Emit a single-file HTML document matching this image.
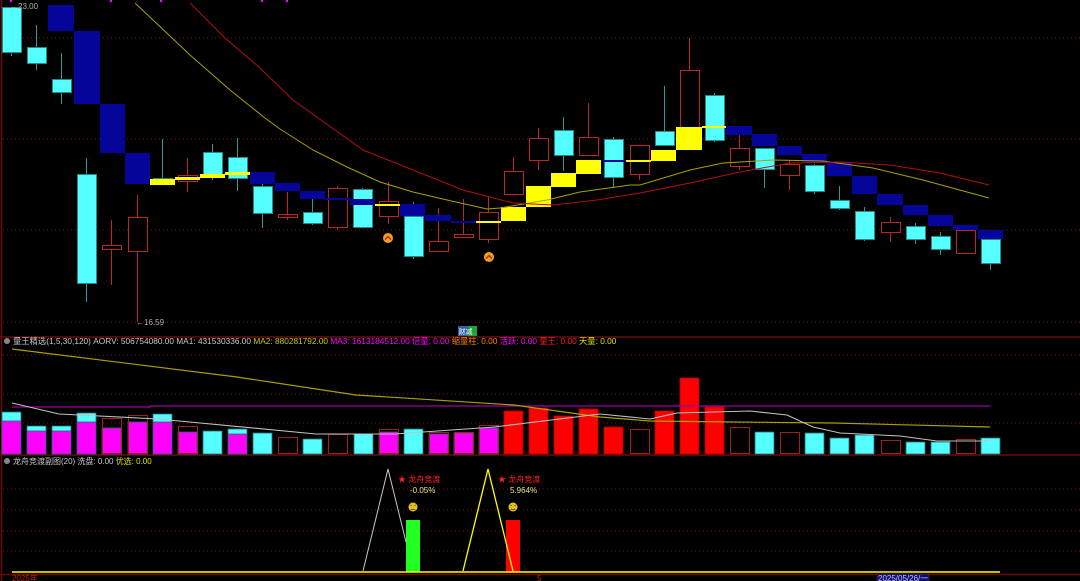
<!DOCTYPE html>
<html><head><meta charset="utf-8"><style>
html,body{margin:0;padding:0;background:#000;width:1080px;height:581px;overflow:hidden}
svg{display:block}
text{font-family:"Liberation Sans","Noto Sans CJK SC",sans-serif;font-size:8px}
</style></head><body>
<svg width="1080" height="581" viewBox="0 0 1080 581" xmlns="http://www.w3.org/2000/svg">
<rect width="1080" height="581" fill="#000"/>
<g stroke="#7a1010" stroke-width="1" stroke-dasharray="1,3">
<line x1="3" y1="38" x2="1080" y2="38"/><line x1="3" y1="139" x2="1080" y2="139"/><line x1="3" y1="230" x2="1080" y2="230"/><line x1="3" y1="322" x2="1080" y2="322"/>
<line x1="3" y1="355" x2="1080" y2="355"/><line x1="3" y1="394" x2="1080" y2="394"/><line x1="3" y1="423" x2="1080" y2="423"/>
<line x1="3" y1="489" x2="1080" y2="489"/><line x1="3" y1="510" x2="1080" y2="510"/><line x1="3" y1="531" x2="1080" y2="531"/><line x1="3" y1="551" x2="1080" y2="551"/>
</g>
<g stroke="#6a0c0c" stroke-width="1.5">
<line x1="0" y1="337" x2="1080" y2="337"/><line x1="0" y1="455" x2="1080" y2="455"/><line x1="0" y1="574.5" x2="1080" y2="574.5"/>
<line x1="1.5" y1="0" x2="1.5" y2="581"/>
</g>
<g stroke-width="1">
<g stroke="#2a9a9a"><line x1="11.5" y1="7" x2="11.5" y2="56"/><line x1="36.5" y1="25" x2="36.5" y2="70"/><line x1="61.5" y1="53" x2="61.5" y2="104"/><line x1="86.5" y1="158" x2="86.5" y2="302"/><line x1="162.5" y1="139" x2="162.5" y2="185"/><line x1="212.5" y1="144" x2="212.5" y2="180"/><line x1="237.5" y1="138" x2="237.5" y2="191"/><line x1="262.5" y1="184" x2="262.5" y2="228"/><line x1="312.5" y1="199" x2="312.5" y2="225"/><line x1="362.5" y1="188" x2="362.5" y2="228"/><line x1="413.5" y1="202" x2="413.5" y2="259"/><line x1="563.5" y1="117" x2="563.5" y2="171"/><line x1="613.5" y1="137" x2="613.5" y2="188"/><line x1="664.5" y1="86" x2="664.5" y2="145"/><line x1="714.5" y1="93" x2="714.5" y2="142"/><line x1="764.5" y1="148" x2="764.5" y2="188"/><line x1="814.5" y1="164" x2="814.5" y2="194"/><line x1="839.5" y1="186" x2="839.5" y2="210"/><line x1="864.5" y1="207" x2="864.5" y2="241"/><line x1="915.5" y1="223" x2="915.5" y2="244"/><line x1="940.5" y1="232" x2="940.5" y2="255"/><line x1="990.5" y1="233" x2="990.5" y2="270"/></g>
<g stroke="#b82828"><line x1="111.5" y1="220" x2="111.5" y2="285"/><line x1="137.5" y1="195" x2="137.5" y2="322"/><line x1="187.5" y1="158" x2="187.5" y2="192"/><line x1="287.5" y1="192" x2="287.5" y2="220"/><line x1="337.5" y1="186" x2="337.5" y2="230"/><line x1="388.5" y1="182" x2="388.5" y2="224"/><line x1="438.5" y1="208" x2="438.5" y2="251"/><line x1="463.5" y1="199" x2="463.5" y2="237"/><line x1="488.5" y1="197" x2="488.5" y2="243"/><line x1="513.5" y1="157" x2="513.5" y2="194"/><line x1="538.5" y1="128" x2="538.5" y2="170"/><line x1="588.5" y1="103" x2="588.5" y2="155"/><line x1="639.5" y1="145" x2="639.5" y2="180"/><line x1="689.5" y1="38" x2="689.5" y2="127"/><line x1="739.5" y1="135" x2="739.5" y2="170"/><line x1="789.5" y1="160" x2="789.5" y2="190"/><line x1="890.5" y1="217" x2="890.5" y2="242"/><line x1="965.5" y1="230" x2="965.5" y2="253"/></g>
<g fill="#55ffff" stroke="#1e8a8a">
<rect x="2.5" y="7.5" width="19" height="45"/><rect x="27.5" y="47.5" width="19" height="16"/><rect x="52.5" y="79.5" width="19" height="13"/><rect x="77.5" y="174.5" width="19" height="109"/><rect x="153.5" y="178.5" width="19" height="4"/><rect x="203.5" y="152.5" width="19" height="23"/><rect x="228.5" y="157.5" width="19" height="21"/><rect x="253.5" y="186.5" width="19" height="27"/><rect x="303.5" y="212.5" width="19" height="11"/><rect x="353.5" y="189.5" width="19" height="38"/><rect x="404.5" y="216.5" width="19" height="40"/><rect x="554.5" y="130.5" width="19" height="25"/><rect x="604.5" y="139.5" width="19" height="38"/><rect x="655.5" y="131.5" width="19" height="14"/><rect x="705.5" y="95.5" width="19" height="45"/><rect x="755.5" y="148.5" width="19" height="21"/><rect x="805.5" y="165.5" width="19" height="26"/><rect x="830.5" y="200.5" width="19" height="8"/><rect x="855.5" y="211.5" width="19" height="28"/><rect x="906.5" y="226.5" width="19" height="13"/><rect x="931.5" y="236.5" width="19" height="13"/><rect x="981.5" y="239.5" width="19" height="24"/>
</g>
<g fill="#000" stroke="#b82828">
<rect x="102.5" y="245.5" width="19" height="4"/><rect x="128.5" y="217.5" width="19" height="34"/><rect x="178.5" y="175.5" width="19" height="6"/><rect x="278.5" y="214.5" width="19" height="3"/><rect x="328.5" y="188.5" width="19" height="39"/><rect x="379.5" y="201.5" width="19" height="15"/><rect x="429.5" y="241.5" width="19" height="10"/><rect x="454.5" y="234.5" width="19" height="3"/><rect x="479.5" y="212.5" width="19" height="27"/><rect x="504.5" y="171.5" width="19" height="23"/><rect x="529.5" y="138.5" width="19" height="22"/><rect x="579.5" y="137.5" width="19" height="18"/><rect x="630.5" y="145.5" width="19" height="29"/><rect x="680.5" y="70.5" width="19" height="57"/><rect x="730.5" y="148.5" width="19" height="18"/><rect x="780.5" y="164.5" width="19" height="11"/><rect x="881.5" y="222.5" width="19" height="10"/><rect x="956.5" y="230.5" width="19" height="23"/>
</g>
</g>
<g fill="#050599">
<rect x="48" y="5" width="26" height="26"/><rect x="74" y="31" width="26" height="73"/><rect x="100" y="104" width="25" height="49"/><rect x="125" y="153" width="25" height="31"/><rect x="250" y="172" width="25" height="12"/><rect x="275" y="183" width="25" height="8"/><rect x="300" y="191" width="25" height="8"/><rect x="325" y="198" width="25" height="2"/><rect x="350" y="199" width="25" height="6"/><rect x="400" y="204" width="25" height="12"/><rect x="425" y="215" width="26" height="6"/><rect x="451" y="221" width="25" height="2"/><rect x="601" y="160" width="25" height="2"/><rect x="726" y="126" width="26" height="9"/><rect x="752" y="134" width="25" height="12"/><rect x="777" y="146" width="25" height="9"/><rect x="802" y="154" width="25" height="8"/><rect x="827" y="162" width="25" height="14"/><rect x="852" y="176" width="25" height="18"/><rect x="877" y="194" width="26" height="11"/><rect x="903" y="205" width="25" height="10"/><rect x="928" y="215" width="25" height="11"/><rect x="953" y="225" width="25" height="5"/><rect x="978" y="230" width="25" height="9"/>
</g>
<g fill="#ffff00">
<rect x="150" y="179" width="25" height="6"/><rect x="175" y="177" width="25" height="3"/><rect x="200" y="174" width="25" height="4"/><rect x="225" y="172" width="25" height="3"/><rect x="375" y="204" width="25" height="2"/><rect x="476" y="221" width="25" height="2"/><rect x="501" y="207" width="25" height="14"/><rect x="526" y="186" width="25" height="21"/><rect x="551" y="173" width="25" height="14"/><rect x="576" y="160" width="25" height="14"/><rect x="626" y="160" width="25" height="2"/><rect x="651" y="150" width="25" height="11"/><rect x="676" y="127" width="26" height="23"/><rect x="702" y="126" width="24" height="2"/>
</g>
<polyline fill="none" stroke="#a8a000" stroke-width="1" points="135,3 190,55 230,90 265,118 280,129 313,150 347,167 380,182 413,192 447,200 487,209 500,208 547,200 580,192 630,185 640,185 690,170 723,163 773,160 823,161 873,168 923,180 989,198"/>
<polyline fill="none" stroke="#b01010" stroke-width="1" points="190,3 225,38 260,68 293,100 363,150 413,170 463,190 513,203 553,205 597,200 640,193 690,183 740,172 790,163 840,162 890,165 940,173 989,185"/>
<g><circle cx="388" cy="238" r="5" fill="#f0a020"/><path d="M385 239.5l3-3 3 3" stroke="#b02000" stroke-width="1.3" fill="none"/>
<circle cx="489" cy="257" r="5" fill="#f0a020"/><path d="M486 258.5l3-3 3 3" stroke="#b02000" stroke-width="1.3" fill="none"/></g>
<g fill="#ff00ff"><rect x="10" y="0" width="2" height="2"/><rect x="110" y="0" width="2" height="2"/><rect x="160" y="0" width="2" height="2"/><rect x="261" y="0" width="2" height="2"/><rect x="286" y="0" width="2" height="2"/></g>
<text x="10" y="9" fill="#b0b0b0">←23.00</text>
<text x="136" y="325" fill="#b0b0b0">←16.59</text>
<rect x="458" y="326" width="10" height="10" fill="#3060a0"/><rect x="468" y="326" width="9" height="10" fill="#20a040"/>
<text x="458.5" y="334" fill="#fff" style="font-size:7px">财减</text>
<circle cx="7" cy="341" r="3" fill="#888"/>
<text y="344" x="13" style="font-size:8.3px"><tspan fill="#c8c8c8">量王精选(1,5,30,120)  AORV: 506754080.00  MA1: 431530336.00 </tspan><tspan fill="#c8c800"> MA2: 880281792.00 </tspan><tspan fill="#ff00ff"> MA3: 1613184512.00 </tspan><tspan fill="#ff00ff"> 倍量: 0.00 </tspan><tspan fill="#ff8000"> 缩量柱: 0.00 </tspan><tspan fill="#ff00ff"> 活跃: 0.00 </tspan><tspan fill="#ff2020"> 量王: 0.00 </tspan><tspan fill="#e0e000"> 天量: 0.00</tspan></text>
<g stroke="#18707a" stroke-width="0.8">
<g fill="#ff00ff"><rect x="2" y="421" width="19" height="33"/><rect x="27" y="431" width="19" height="23"/><rect x="52" y="431" width="19" height="23"/><rect x="77" y="422" width="19" height="32"/><rect x="102" y="428" width="19" height="26"/><rect x="128" y="422" width="19" height="32"/><rect x="153" y="422" width="19" height="32"/><rect x="178" y="432" width="19" height="22"/><rect x="228" y="434" width="19" height="20"/><rect x="379" y="432" width="19" height="22"/><rect x="429" y="434" width="19" height="20"/><rect x="454" y="433" width="19" height="21"/><rect x="479" y="428" width="19" height="26"/></g>
<g fill="#55ffff"><rect x="2" y="412" width="19" height="9"/><rect x="27" y="426" width="19" height="5"/><rect x="52" y="426" width="19" height="5"/><rect x="77" y="413" width="19" height="9"/><rect x="153" y="414" width="19" height="8"/><rect x="228" y="429" width="19" height="5"/><rect x="203" y="431" width="19" height="23"/><rect x="253" y="433" width="19" height="21"/><rect x="303" y="439" width="19" height="15"/><rect x="404" y="429" width="19" height="25"/><rect x="354" y="434" width="19" height="20"/><rect x="755" y="432" width="19" height="22"/><rect x="805" y="433" width="19" height="21"/><rect x="830" y="438" width="19" height="16"/><rect x="855" y="435" width="19" height="19"/><rect x="906" y="442" width="19" height="12"/><rect x="931" y="442" width="19" height="12"/><rect x="981" y="438" width="19" height="16"/></g>
</g>
<g fill="none" stroke="#a02020" stroke-width="1">
<rect x="102.5" y="418.5" width="19" height="35"/><rect x="128.5" y="415.5" width="19" height="38"/><rect x="178.5" y="426.5" width="19" height="27"/><rect x="278.5" y="437.5" width="19" height="16"/><rect x="328.5" y="434.5" width="19" height="19"/><rect x="379.5" y="429.5" width="19" height="24"/><rect x="429.5" y="432.5" width="19" height="21"/><rect x="454.5" y="432.5" width="19" height="21"/><rect x="479.5" y="425.5" width="19" height="28"/><rect x="630.5" y="429.5" width="19" height="24"/><rect x="730.5" y="427.5" width="19" height="26"/><rect x="780.5" y="432.5" width="19" height="21"/><rect x="881.5" y="440.5" width="19" height="13"/><rect x="956.5" y="439.5" width="19" height="14"/>
</g>
<g fill="#ff0000" stroke="#b00000" stroke-width="0.8"><rect x="504" y="411" width="19" height="43"/><rect x="529" y="408" width="19" height="46"/><rect x="554" y="416" width="19" height="38"/><rect x="579" y="409" width="19" height="45"/><rect x="604" y="427" width="19" height="27"/><rect x="655" y="411" width="19" height="43"/><rect x="680" y="378" width="19" height="76"/><rect x="705" y="407" width="19" height="47"/></g>
<polyline fill="none" stroke="#a000a0" stroke-width="1.2" points="12,407 150,407 150,406 990,406"/>
<polyline fill="none" stroke="#a8a000" stroke-width="1.2" points="12,349 237,377 356,395 514,405 600,417 650,421 733,422 833,423 990,427"/>
<polyline fill="none" stroke="#c0c0c0" stroke-width="1.1" points="12,403 59,414 158,419 316,434 395,434 494,427 600,414 650,419 677,413 750,411 787,415 813,427 840,433 900,436 937,441 990,441"/>
<circle cx="7" cy="461" r="3" fill="#888"/>
<text y="464" x="13"><tspan fill="#c8c8c8">龙舟竞渡副图(20)  洗盘: 0.00 </tspan><tspan fill="#e0e000"> 优选: 0.00</tspan></text>
<rect x="406" y="520" width="14" height="52" fill="#22ff22"/>
<rect x="506" y="520" width="14" height="52" fill="#ff0000"/>
<polyline fill="none" stroke="#c8c8c8" stroke-width="1" points="363,571 388,469 406,542"/>
<polyline fill="none" stroke="#ffff00" stroke-width="1.3" points="463,571 488,469 513,571"/>
<line x1="12" y1="572" x2="1000" y2="572" stroke="#ffff00" stroke-width="1.6"/>
<text x="398" y="482" fill="#ff2020">★ 龙舟竞渡</text>
<text x="410" y="493" fill="#e8e880">-0.05%</text>
<text x="498" y="482" fill="#ff2020">★ 龙舟竞渡</text>
<text x="510" y="493" fill="#e8e880">5.964%</text>
<circle cx="413" cy="507" r="4.5" fill="#e8c020"/><path d="M411 505.5h0.1M415 505.5h0.1" stroke="#604000" stroke-width="1.2" stroke-linecap="round"/><path d="M410.8 510.2q2.2-2 4.4 0" stroke="#604000" stroke-width="0.8" fill="none"/>
<circle cx="513" cy="507" r="4.5" fill="#e8c020"/><path d="M511 505.5h0.1M515 505.5h0.1" stroke="#604000" stroke-width="1.2" stroke-linecap="round"/><path d="M510.8 508.8q2.2 2 4.4 0" stroke="#604000" stroke-width="0.8" fill="none"/>
<text x="12" y="581" fill="#c02020">2025年</text>
<text x="537" y="581" fill="#c02020">5</text>
<rect x="877" y="574" width="52" height="8" fill="#101070" stroke="#602060" stroke-width="0.6"/>
<text x="878" y="581" fill="#c0c0ff">2025/05/26/一</text>
</svg>
</body></html>
